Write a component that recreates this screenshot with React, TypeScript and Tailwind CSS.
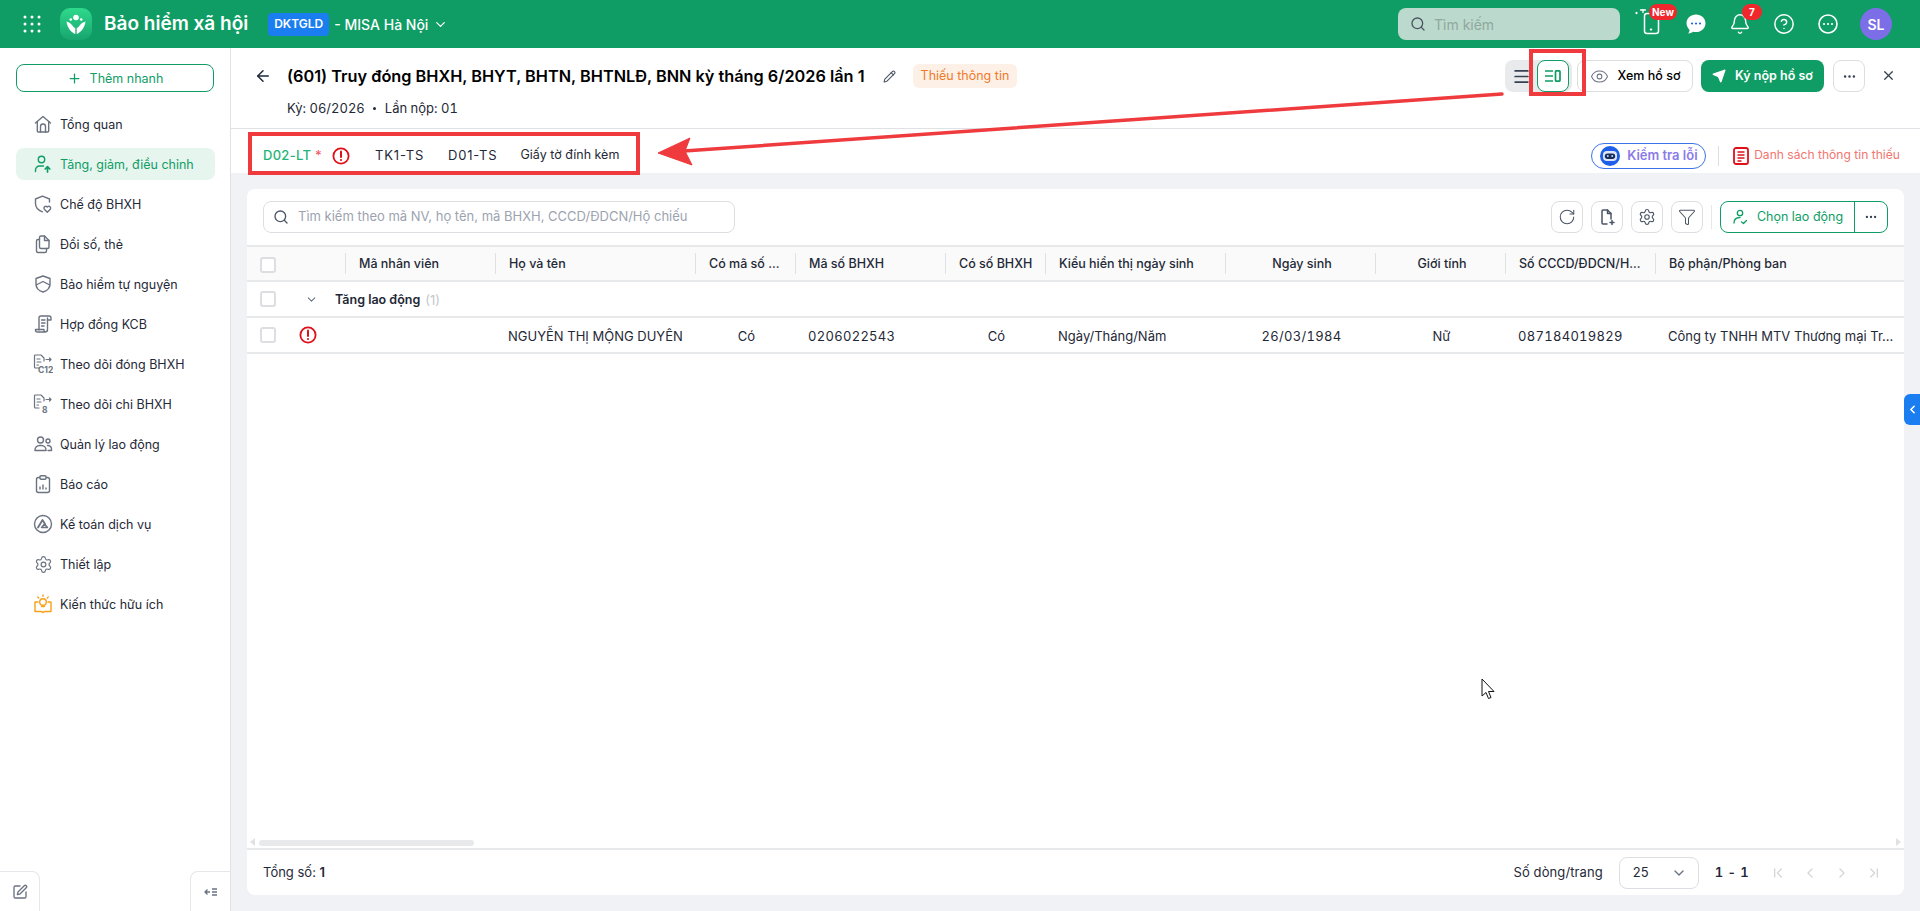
import React from 'react';
import {
  ArrowLeft, Bell, ChevronDown, ChevronFirst, ChevronLast, ChevronLeft, ChevronRight, CircleHelp,
  Ellipsis, Eye, Filter, Menu, Pencil, Plus, RotateCw, Search,
  Send, Settings, SquarePen, X,
} from 'lucide-react';

// --- Sidebar icons ---

const NavSvg = ({ children, color = '#6b7280' }: { children: React.ReactNode; color?: string }) => (
  <svg width="20" height="20" viewBox="0 0 20 20" fill="none" stroke={color} strokeWidth="1.4" strokeLinecap="round" strokeLinejoin="round">
    {children}
  </svg>
);

const IconHome = () => (
  <NavSvg>
    <path d="M2.500 9 10 2.500 17.500 9" />
    <path d="M4.300 7.800V17a1 1 0 0 0 1 1h9.400a1 1 0 0 0 1-1V7.800" />
    <path d="M7.500 18v-5.500a2.500 2.500 0 0 1 5 0V18" />
  </NavSvg>
);

const IconUserUp = () => (
  <NavSvg color="#0f9d65">
    <circle cx="8.500" cy="5.500" r="3.200" />
    <path d="M2.500 17.500v-1.500a4 4 0 0 1 4-4h4" />
    <path d="M14.500 18v-5M12.200 15l2.300-2.300 2.300 2.300" strokeWidth="1.700" />
  </NavSvg>
);

const IconShieldHeart = () => (
  <NavSvg>
    <path d="M9.500 17.800C5 16.300 2.500 13.500 2.500 9.500V5l7-2.800L16.500 5v3" />
    <path d="M14.300 18.300l-3-3a1.900 1.900 0 0 1 2.700-2.600l.3.300.3-.3a1.900 1.900 0 0 1 2.700 2.600z" />
  </NavSvg>
);

const IconCards = () => (
  <NavSvg>
    <path d="M8 2h3.500L16 6.500V13a1.500 1.500 0 0 1-1.500 1.500H8A1.500 1.500 0 0 1 6.500 13V3.500A1.500 1.500 0 0 1 8 2z" />
    <path d="M6.500 5.500H5A1.500 1.500 0 0 0 3.500 7v10A1.500 1.500 0 0 0 5 18.500h7a1.500 1.500 0 0 0 1.500-1.500v-2.500" />
    <path d="M11.500 2v4.500H16" />
  </NavSvg>
);

const IconShieldBand = () => (
  <NavSvg>
    <path d="M10 2 17 4.500v5.500c0 4-3 6.800-7 8-4-1.200-7-4-7-8V4.500z" />
    <path d="M3.200 11 10 7.500l6.800 3.500" />
  </NavSvg>
);

const IconScroll = () => (
  <NavSvg>
    <path d="M6 16V4a2 2 0 0 1 2-2h8a2 2 0 0 1 2 2v2h-3.500" />
    <path d="M14.500 4v11.500a2.500 2.500 0 0 1-2.500 2.500H4.500A2 2 0 0 1 2.500 16v-.5H11v1a1.500 1.500 0 0 0 1 1.500" />
    <path d="M8.500 6H12M8.500 9H12M8.500 12H11" />
  </NavSvg>
);

const IconDoc = ({ label }: { label: string }) => (
  <svg width="20" height="20" viewBox="0 0 20 20" fill="none" stroke="#6b7280" strokeWidth="1.200" strokeLinecap="round" strokeLinejoin="round">
    <path d="M6 14H2.500a1 1 0 0 1-1-1V2a1 1 0 0 1 1-1H8l3 3v3" />
    <path d="M4 5h3M4 8h4M4 11h1.500" />
    <path d="M13 5.500h5M16.500 4 18 5.500 16.500 7" />
    <text x={label.length > 1 ? 5 : 9} y="19" fontSize="8.500" fontWeight="700" fill="#6b7280" stroke="none" fontFamily="Inter, sans-serif">{label}</text>
  </svg>
);

const IconUsers = () => (
  <NavSvg>
    <circle cx="7.500" cy="6" r="3" />
    <circle cx="15" cy="7" r="2" />
    <path d="M2 16.500v-.5a4.500 4.500 0 0 1 4.500-4.500h2a4.500 4.500 0 0 1 4.500 4.500v.5z" />
    <path d="M14.500 11.500H15a3.500 3.500 0 0 1 3.500 3.500v1.500H15" />
  </NavSvg>
);

const IconReport = () => (
  <NavSvg>
    <rect x="3.500" y="3.500" width="13" height="15" rx="2" />
    <rect x="7" y="1.800" width="6" height="3.500" rx="1" fill="#fff" />
    <path d="M7 15v-2M10 15v-4M13 15v-1" />
  </NavSvg>
);

const IconAccount = () => (
  <NavSvg>
    <circle cx="10" cy="10" r="8.500" />
    <path d="M5 13.500 9.500 6l2.500 4" strokeWidth="1.800" />
    <path d="M8.500 13.500 11.500 10l3 3.500z" strokeWidth="1.500" />
  </NavSvg>
);

const IconKnowledge = () => (
  <NavSvg color="#f9a01b">
    <circle cx="10" cy="8" r="3.300" />
    <path d="M10 1v1.300M4.800 3l.9.9M15.200 3l-.9.9M8.500 12.500h3" />
    <path d="M5 8H2v9.500h6c1 0 1.500.5 2 1 .5-.5 1-1 2-1h6V8h-3" />
  </NavSvg>
);

const navItems: { label: string; icon: React.ReactNode; active?: boolean }[] = [
  { label: 'Tổng quan', icon: <IconHome /> },
  { label: 'Tăng, giảm, điều chỉnh', icon: <IconUserUp />, active: true },
  { label: 'Chế độ BHXH', icon: <IconShieldHeart /> },
  { label: 'Đổi số, thẻ', icon: <IconCards /> },
  { label: 'Bảo hiểm tự nguyện', icon: <IconShieldBand /> },
  { label: 'Hợp đồng KCB', icon: <IconScroll /> },
  { label: 'Theo dõi đóng BHXH', icon: <IconDoc label="C12" /> },
  { label: 'Theo dõi chi BHXH', icon: <IconDoc label="8" /> },
  { label: 'Quản lý lao động', icon: <IconUsers /> },
  { label: 'Báo cáo', icon: <IconReport /> },
  { label: 'Kế toán dịch vụ', icon: <IconAccount /> },
  { label: 'Thiết lập', icon: <Settings size={19} strokeWidth={1.500} className="text-gray-500" /> },
  { label: 'Kiến thức hữu ích', icon: <IconKnowledge /> },
];

// --- Table data ---

const gridCols = 'grid grid-cols-[98px_150px_200px_100px_150px_100px_180px_150px_130px_150px_250px]';

const headers: { label: string; center?: boolean }[] = [
  { label: '' },
  { label: 'Mã nhân viên' },
  { label: 'Họ và tên' },
  { label: 'Có mã số ...' },
  { label: 'Mã số BHXH' },
  { label: 'Có số BHXH' },
  { label: 'Kiểu hiển thị ngày sinh' },
  { label: 'Ngày sinh', center: true },
  { label: 'Giới tính', center: true },
  { label: 'Số CCCD/ĐDCN/H...' },
  { label: 'Bộ phận/Phòng ban' },
];

const row: { label: string; center?: boolean; num?: boolean }[] = [
  { label: '' },
  { label: 'NGUYỄN THỊ MỘNG DUYÊN' },
  { label: 'Có', center: true },
  { label: '0206022543', num: true },
  { label: 'Có', center: true },
  { label: 'Ngày/Tháng/Năm' },
  { label: '26/03/1984', center: true, num: true },
  { label: 'Nữ', center: true },
  { label: '087184019829', num: true },
  { label: 'Công ty TNHH MTV Thương mại Tr...' },
];

// --- Small pieces ---

const Checkbox = () => <span className="block shrink-0 w-4 h-4 rounded-[3px] border-2 border-[#dcdee2] bg-white" />;

const ErrorIcon = () => (
  <svg width="18" height="18" viewBox="0 0 18 18" fill="none">
    <circle cx="9" cy="9" r="7.600" stroke="#e0101a" strokeWidth="1.800" />
    <path d="M9 4.500v5.500" stroke="#e0101a" strokeWidth="2" strokeLinecap="round" />
    <circle cx="9" cy="13" r="1.100" fill="#e0101a" />
  </svg>
);

const ToolButton = ({ children }: { children: React.ReactNode }) => (
  <button className="w-8 h-8 rounded-lg border border-[#dcdee2] flex items-center justify-center text-gray-600 bg-white">{children}</button>
);

const Logo = () => (
  <svg width="32" height="32" viewBox="0 0 32 32">
    <defs>
      <linearGradient id="lg" x1="0" y1="0" x2="0" y2="1">
        <stop offset="0" stopColor="#2fd98c" />
        <stop offset="1" stopColor="#17a56f" />
      </linearGradient>
    </defs>
    <rect width="32" height="32" rx="10" fill="url(#lg)" />
    <circle cx="16" cy="9.500" r="2.800" fill="#fff" />
    <circle cx="10.800" cy="11.500" r="1.300" fill="#fff" />
    <circle cx="21.200" cy="11.500" r="1.300" fill="#fff" />
    <path d="M6.500 13.500c2.800.5 5 2.500 6.500 4.800.7 1 1.500 1.500 2.300 1.700V26c-4.800-2-8-6.500-8.800-12.500z" fill="#fff" />
    <path d="M25.500 13.500c-2.800.5-5 2.500-6.500 4.800-.7 1-1.500 1.500-2.300 1.700V26c4.800-2 8-6.500 8.800-12.500z" fill="#fff" />
  </svg>
);

const Robot = () => (
  <svg width="20" height="20" viewBox="0 0 20 20">
    <circle cx="10" cy="10" r="10" fill="#1d5fe8" />
    <rect x="3" y="5" width="14" height="10" rx="4" fill="#dfe7f7" />
    <rect x="4.800" y="7.500" width="10.400" height="5.500" rx="2.700" fill="#1e2a5a" />
    <circle cx="7.800" cy="10" r="1" fill="#9ee7ff" />
    <circle cx="12.200" cy="10" r="1" fill="#9ee7ff" />
  </svg>
);

const PhoneSpark = () => (
  <svg width="28" height="30" viewBox="0 0 28 30" fill="none" stroke="#fff" strokeWidth="1.500" strokeLinecap="round">
    <rect x="11.500" y="4.500" width="14" height="20" rx="2.500" />
    <path d="M18 20v1M17.500 20.500h1" />
    <path d="M10 -1.500v5M7.500 1h5" strokeWidth="1.300" />
    <path d="M3.500 3.500v1M3 4h1" />
  </svg>
);

const ChatBubble = () => (
  <svg width="22" height="22" viewBox="0 0 22 22">
    <path d="M11 1.500c5.300 0 9.500 3.800 9.500 8.800s-4.200 8.800-9.500 8.800c-1 0-2-.1-3-.4-1.300 1-3 1.700-5 1.800 1-1 1.500-2.200 1.600-3.500C2.800 15 1.500 12.800 1.500 10.300c0-5 4.200-8.800 9.500-8.800z" fill="#fff" />
    <circle cx="7" cy="10.500" r="1.100" fill="#2563eb" />
    <circle cx="11" cy="10.500" r="1.100" fill="#2563eb" />
    <circle cx="15" cy="10.500" r="1.100" fill="#2563eb" />
  </svg>
);

const MoreCircle = () => (
  <svg width="20" height="20" viewBox="0 0 20 20" fill="none">
    <circle cx="10" cy="10" r="9" stroke="#fff" strokeWidth="1.600" />
    <circle cx="6" cy="10" r="1.100" fill="#fff" />
    <circle cx="10" cy="10" r="1.100" fill="#fff" />
    <circle cx="14" cy="10" r="1.100" fill="#fff" />
  </svg>
);

// --- Layout parts ---

const TopBar = () => (
  <header className="h-12 shrink-0 bg-[#0f9d65] flex items-center pl-[23px] pr-[28px] text-white">
    <svg width="18" height="18" viewBox="0 0 18 18" fill="#fff">
      {[2, 9, 16].flatMap((y) => [2, 9, 16].map((x) => <circle key={`${x}-${y}`} cx={x} cy={y} r="1.500" />))}
    </svg>
    <div className="ml-[19px]"><Logo /></div>
    <span className="ml-3 text-[19px] font-semibold">Bảo hiểm xã hội</span>
    <span className="ml-[20px] h-[23px] px-[6px] rounded bg-[#1a7df0] text-[12px] font-semibold flex items-center">DKTGLD</span>
    <span className="ml-[5px] text-[14px] font-medium">- MISA Hà Nội</span>
    <ChevronDown size={15} className="ml-[5px]" />
    <div className="ml-auto flex items-center">
      <div className="w-[222px] h-8 rounded-lg bg-[#bcd9cd] flex items-center pl-[12px] gap-[8px] text-[14px] text-[#8fa89e]">
        <Search size={16} className="text-[#4b5563]" />
        Tìm kiếm
      </div>
      <div className="relative ml-[13px] w-[28px] h-[30px]">
        <PhoneSpark />
        <span className="absolute -top-[5px] left-[16px] h-4 px-[3px] rounded-full bg-[#f0282d] text-[10px] font-bold leading-4">New</span>
      </div>
      <div className="ml-[24px]"><ChatBubble /></div>
      <div className="relative ml-[22px]">
        <Bell size={22} strokeWidth={1.600} />
        <span className="absolute -top-[9px] left-[13px] w-[20px] h-4 rounded-full bg-[#f0282d] text-[10px] font-bold leading-4 text-center">7</span>
      </div>
      <CircleHelp size={22} strokeWidth={1.600} className="ml-[22px]" />
      <div className="ml-[23px]"><MoreCircle /></div>
      <span className="ml-[22px] w-8 h-8 rounded-full bg-[#7c6ee6] text-[14px] font-semibold flex items-center justify-center">SL</span>
    </div>
  </header>
);

const Sidebar = () => (
  <aside className="w-[231px] shrink-0 border-r border-[#dfe1e5] bg-white flex flex-col relative">
    <div className="pl-4 pr-[16px] pt-4">
      <button className="w-[198px] h-[28px] rounded-lg border border-[#0f9d65] flex items-center justify-center gap-[8px] text-[12.500px] text-[#0f9d65]">
        <Plus size={15} />
        <span className="pt-[2px]">Thêm nhanh</span>
      </button>
    </div>
    <nav className="pl-4 pr-[15px] mt-4 flex flex-col gap-2">
      {navItems.map((item) => (
        <div key={item.label} className={`h-8 rounded-lg pl-[17px] flex items-center gap-[7px] text-[12.500px] ${item.active ? 'bg-[#e7f5ef] text-[#0f9d65]' : 'text-[#1f2937]'}`}>
          <span className="w-5 flex items-center justify-center">{item.icon}</span>
          <span className="pt-[2px]">{item.label}</span>
        </div>
      ))}
    </nav>
    <div className="mt-auto flex justify-between">
      <div className="w-10 h-10 border-t border-r border-[#e5e7eb] rounded-tr-lg flex items-center justify-center text-gray-500">
        <SquarePen size={16} />
      </div>
      <div className="w-10 h-10 border-t border-l border-[#e5e7eb] rounded-tl-lg flex items-center justify-center text-gray-500">
        <svg width="14" height="14" viewBox="0 0 14 14" fill="none" stroke="currentColor" strokeWidth="1.300">
          <path d="M6 7H1M3.500 4.500 1 7l2.500 2.500M8 4h5M8 7h5M8 10h5" />
        </svg>
      </div>
    </div>
  </aside>
);

const PageHeader = () => (
  <div className="h-[81px] shrink-0 bg-white border-b border-[#dfe1e5] flex pl-[23px] pr-[24px] pt-3">
    <ArrowLeft size={18} className="mt-[7px] text-gray-800" />
    <div className="ml-[15px]">
      <div className="h-8 flex items-center">
        <h1 className="pt-px text-[16.300px] font-semibold text-black whitespace-nowrap">(601) Truy đóng BHXH, BHYT, BHTN, BHTNLĐ, BNN kỳ tháng 6/2026 lần 1</h1>
        <Pencil size={13} className="ml-[18px] text-gray-600" />
        <span className="ml-[17px] h-6 px-[8px] rounded-md bg-[#fdf0e7] text-[#f07a2b] text-[12.500px] flex items-center">Thiếu thông tin</span>
      </div>
      <div className="mt-[7px] text-[13px] text-[#1f2937] flex items-center tabular-nums">
        Kỳ: 06/2026
        <span className="ml-[8px] mr-[9px] w-[3px] h-[3px] rounded-full bg-[#1f2937]" />
        Lần nộp: 01
      </div>
    </div>
    <div className="ml-auto flex items-start">
      <div className="w-[67px] h-8 rounded-lg bg-[#e9eaec] flex items-center pl-[7px]">
        <Menu size={19} strokeWidth={2.200} className="text-gray-700" />
        <span className="ml-[6px] w-8 h-8 rounded-lg border border-[#0f9d65] bg-white flex items-center justify-center text-[#0f9d65]">
          <svg width="16" height="12" viewBox="0 0 16 12" fill="none" stroke="currentColor" strokeWidth="1.700">
            <path d="M0 1h8M0 6h8M0 11h8" />
            <rect x="10.500" y="0.800" width="4.500" height="10.400" rx="1" />
          </svg>
        </span>
      </div>
      <button className="ml-[5px] w-[116px] h-8 rounded-lg border border-[#dcdee2] flex items-center justify-center gap-[9px] text-[12.500px] font-medium text-black">
        <Eye size={19} strokeWidth={1.300} className="text-gray-500" />
        Xem hồ sơ
      </button>
      <button className="ml-2 w-[123px] h-8 rounded-lg bg-[#0f9d65] flex items-center justify-center gap-[9px] text-[12.500px] font-semibold text-white">
        <Send size={14} fill="#fff" />
        Ký nộp hồ sơ
      </button>
      <button className="ml-[9px] w-8 h-8 rounded-lg border border-[#dcdee2] flex items-center justify-center text-gray-700">
        <Ellipsis size={15} />
      </button>
      <X size={15} className="ml-[16px] mt-[8px] text-gray-700" />
    </div>
  </div>
);

const TabStrip = () => (
  <div className="h-[44px] shrink-0 bg-white flex items-center pl-[32px] pr-[20px] pt-[9px]">
    <span className="text-[13px] font-medium text-[#1fb577] tracking-[0.3px]">D02-LT <span className="text-[#f0616a]">*</span></span>
    <span className="ml-[10px]"><ErrorIcon /></span>
    <span className="ml-[25px] text-[13px] text-[#1f2937] tracking-[0.8px]">TK1-TS</span>
    <span className="ml-[24px] text-[13px] text-[#1f2937] tracking-[0.8px]">D01-TS</span>
    <span className="ml-[23px] text-[12.500px] text-[#1f2937]">Giấy tờ đính kèm</span>
    <div className="ml-auto flex items-center">
      <div className="w-[115px] h-[26px] rounded-full border border-[#3b74ea] flex items-center pl-[8px] gap-[7px] text-[13px] font-semibold text-[#8b7be8] whitespace-nowrap">
        <Robot />
        Kiểm tra lỗi
      </div>
      <span className="ml-[12px] h-5 w-px bg-[#dcdee2]" />
      <svg width="16" height="18" viewBox="0 0 16 18" fill="none" className="ml-[14px]">
        <rect x="1" y="1" width="14" height="16" rx="2" stroke="#e0101a" strokeWidth="1.800" />
        <path d="M4.500 5h7M4.500 8h7M4.500 11h7M4.500 14h4" stroke="#e0101a" strokeWidth="1.400" />
      </svg>
      <span className="ml-[5px] text-[12.100px] text-[#f0766f]">Danh sách thông tin thiếu</span>
    </div>
  </div>
);

const DataCard = () => (
  <section className="flex-1 min-h-0 bg-white rounded-lg overflow-hidden flex flex-col">
    <div className="h-[56px] shrink-0 flex items-center pl-4 pr-4">
      <div className="w-[472px] h-8 rounded-lg border border-[#dcdee2] flex items-center pl-[9px] gap-[9px] text-[13px] text-[#9ca3af]">
        <Search size={16} className="text-gray-600" />
        Tìm kiếm theo mã NV, họ tên, mã BHXH, CCCD/ĐDCN/Hộ chiếu
      </div>
      <div className="ml-auto flex items-center gap-[8px]">
        <ToolButton><RotateCw size={18} strokeWidth={1.400} /></ToolButton>
        <ToolButton>
          <svg width="18" height="18" viewBox="0 0 18 18" fill="none" stroke="currentColor" strokeWidth="1.500" strokeLinecap="round" strokeLinejoin="round">
            <path d="M9 16H5a1 1 0 0 1-1-1V3a1 1 0 0 1 1-1h4.500L13 5.500V11" />
            <path d="M9.500 2v3.500H13M14 12.500v4M12 14.500h4" />
          </svg>
        </ToolButton>
        <ToolButton><Settings size={18} strokeWidth={1.500} /></ToolButton>
        <ToolButton><Filter size={18} strokeWidth={1.400} /></ToolButton>
        <span className="w-px h-6 bg-[#e5e7eb]" />
        <div className="w-[168px] h-8 rounded-lg border border-[#0f9d65] flex items-center text-[#0f9d65] text-[12.500px]">
          <span className="w-[134px] flex items-center justify-center gap-[9px] border-r border-[#0f9d65] h-full">
            <svg width="16" height="16" viewBox="0 0 16 16" fill="none" stroke="currentColor" strokeWidth="1.300" strokeLinecap="round" strokeLinejoin="round">
              <circle cx="8" cy="4" r="2.700" />
              <path d="M2 14c0-3.500 2.500-5.500 6-5.500M9.500 13l2 1.500 3-3" />
            </svg>
            Chọn lao động
          </span>
          <span className="flex-1 flex items-center justify-center text-gray-700"><Ellipsis size={14} /></span>
        </div>
      </div>
    </div>
    <div className="flex-1 min-h-0 overflow-hidden relative">
      <div className={`${gridCols} h-[37px] bg-[#fafafa] border-y-2 border-[#e8e9eb] text-[12.500px] font-medium text-[#1f2937] items-center w-max`}>
        {headers.map((h, i) => (
          <div key={i} className={`h-[21px] flex items-center whitespace-nowrap pl-[13px] pr-[10px] pt-[2px] ${i > 0 ? 'border-l border-[#dfe1e5]' : ''} ${h.center ? 'justify-center' : ''}`}>
            {i === 0 ? <Checkbox /> : h.label}
          </div>
        ))}
      </div>
      <div className="h-[36px] border-b-2 border-[#e8e9eb] flex items-center pl-[13px] text-[12.500px] font-semibold text-[#1f2937]">
        <Checkbox />
        <ChevronDown size={13} className="ml-[29px] text-gray-500" />
        <span className="ml-[17px] pt-[3px]">Tăng lao động</span>
        <span className="ml-[5px] pt-[3px] text-[13px] font-normal text-[#c4c7cc]">(1)</span>
      </div>
      <div className={`${gridCols} h-[36px] border-b-2 border-[#e8e9eb] text-[13px] text-[#1f2937] items-center w-max`}>
        <div className="pl-[13px] flex items-center gap-[23px]"><Checkbox /><ErrorIcon /></div>
        {row.map((c, i) => (
          <div key={i} className={`pl-[13px] pr-[10px] pt-[3px] whitespace-nowrap ${c.center ? 'text-center' : ''} ${c.num ? 'tabular-nums tracking-[0.3px]' : ''}`}>{c.label}</div>
        ))}
      </div>
      <span className="absolute left-[3px] bottom-[2px] w-0 h-0 border-y-[4px] border-y-transparent border-r-[5px] border-r-[#e0e1e4]" />
      <div className="absolute left-[12px] bottom-[2px] w-[215px] h-[6px] rounded-full bg-[#e8e9eb]" />
      <span className="absolute right-[3px] bottom-[2px] w-0 h-0 border-y-[4px] border-y-transparent border-l-[5px] border-l-[#e0e1e4]" />
    </div>
    <footer className="h-[47px] shrink-0 border-t-2 border-[#e8e9eb] flex items-center pl-4 pr-[22px] text-[13px] text-[#1f2937]">
      <span>Tổng số: <b className="font-semibold">1</b></span>
      <span className="ml-auto tracking-[0.1px]">Số dòng/trang</span>
      <div className="ml-[16px] w-[80px] h-8 rounded-lg border border-[#dcdee2] flex items-center pl-[13px] pr-[11px] justify-between">
        25
        <ChevronDown size={16} className="text-gray-500" />
      </div>
      <span className="ml-[16px] font-semibold tabular-nums tracking-[0.4px]">1 - 1</span>
      <div className="ml-[21px] flex items-center gap-[16px] text-[#d4d6da]">
        <ChevronFirst size={16} />
        <ChevronLeft size={16} />
        <ChevronRight size={16} />
        <ChevronLast size={16} />
      </div>
    </footer>
  </section>
);

// --- Annotations drawn over the screenshot ---

const Annotations = () => (
  <>
    <div className="absolute left-[248px] top-[132px] w-[392px] h-[43px] border-4 border-[#ef3a3e] pointer-events-none" />
    <div className="absolute left-[1529px] top-[49px] w-[57px] h-[47px] border-4 border-[#ef3a3e] pointer-events-none" />
    <svg className="absolute left-0 top-0 pointer-events-none" width="1920" height="911">
      <path d="M1502 94 684 151" stroke="#ef3a3e" strokeWidth="3.500" strokeLinecap="round" />
      <path d="M658 153 690 138 685 151 692 165z" fill="#ef3a3e" stroke="#ef3a3e" strokeWidth="1" strokeLinejoin="round" />
      <path d="M1482 679v17l4-3.500 2.500 6 2.500-1-2.500-6h5.500z" fill="#fff" stroke="#111" strokeWidth="1" />
    </svg>
    <div className="absolute right-0 top-[394px] w-4 h-[31px] rounded-l-md bg-[#1a7df0] flex items-center justify-center text-white">
      <ChevronLeft size={13} strokeWidth={3} />
    </div>
  </>
);

const App: React.FC = () => (
  <div className="relative w-full h-screen overflow-hidden flex flex-col bg-white font-['Inter','Noto_Sans',sans-serif]">
    <TopBar />
    <div className="flex-1 min-h-0 flex">
      <Sidebar />
      <main className="flex-1 min-w-0 flex flex-col">
        <PageHeader />
        <TabStrip />
        <div className="flex-1 min-h-0 bg-[#f0f2f5] p-4 flex flex-col">
          <DataCard />
        </div>
      </main>
    </div>
    <Annotations />
  </div>
);

export default App;
